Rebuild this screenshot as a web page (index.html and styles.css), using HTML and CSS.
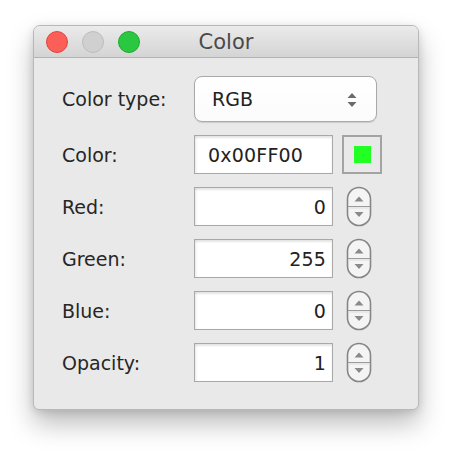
FILE: index.html
```html
<!DOCTYPE html>
<html>
<head>
<meta charset="utf-8">
<link rel="stylesheet" href="styles.css">
</head>
<body>
<div class="window">
  <div class="titlebar">
    <div class="lights">
      <span class="light red"></span>
      <span class="light gray"></span>
      <span class="light green"></span>
    </div>
    <div class="title">Color</div>
  </div>
  <div class="content">
    <div class="label">Color type:</div>
    <div class="select">
      <span>RGB</span>
      <svg class="updown" width="12" height="16" viewBox="0 0 12 16"><path d="M6 1 L10.5 6 H1.5 Z M6 15 L10.5 10 H1.5 Z" fill="#6b6b6b"/></svg>
    </div>

    <div class="label">Color:</div>
    <div class="field left">0x00FF00</div>
    <div class="swatch"><span class="chip"></span></div>

    <div class="label">Red:</div>
    <div class="field">0</div>
    <div class="spin"><svg width="26" height="41" viewBox="0 0 26 41"><rect x="1.5" y="1.5" width="23" height="38" rx="11.5" fill="#f4f4f4" stroke="#868686" stroke-width="1.6"/><line x1="2" y1="20.5" x2="24" y2="20.5" stroke="#9a9a9a" stroke-width="1.2"/><line x1="2" y1="22" x2="24" y2="22" stroke="#dcdcdc" stroke-width="1"/><path d="M13 10.5 L17.5 15.5 H8.5 Z" fill="#8a8a8a"/><path d="M13 31 L17.5 26 H8.5 Z" fill="#8a8a8a"/></svg></div>

    <div class="label">Green:</div>
    <div class="field">255</div>
    <div class="spin"><svg width="26" height="41" viewBox="0 0 26 41"><rect x="1.5" y="1.5" width="23" height="38" rx="11.5" fill="#f4f4f4" stroke="#868686" stroke-width="1.6"/><line x1="2" y1="20.5" x2="24" y2="20.5" stroke="#9a9a9a" stroke-width="1.2"/><line x1="2" y1="22" x2="24" y2="22" stroke="#dcdcdc" stroke-width="1"/><path d="M13 10.5 L17.5 15.5 H8.5 Z" fill="#8a8a8a"/><path d="M13 31 L17.5 26 H8.5 Z" fill="#8a8a8a"/></svg></div>

    <div class="label">Blue:</div>
    <div class="field">0</div>
    <div class="spin"><svg width="26" height="41" viewBox="0 0 26 41"><rect x="1.5" y="1.5" width="23" height="38" rx="11.5" fill="#f4f4f4" stroke="#868686" stroke-width="1.6"/><line x1="2" y1="20.5" x2="24" y2="20.5" stroke="#9a9a9a" stroke-width="1.2"/><line x1="2" y1="22" x2="24" y2="22" stroke="#dcdcdc" stroke-width="1"/><path d="M13 10.5 L17.5 15.5 H8.5 Z" fill="#8a8a8a"/><path d="M13 31 L17.5 26 H8.5 Z" fill="#8a8a8a"/></svg></div>

    <div class="label">Opacity:</div>
    <div class="field">1</div>
    <div class="spin"><svg width="26" height="41" viewBox="0 0 26 41"><rect x="1.5" y="1.5" width="23" height="38" rx="11.5" fill="#f4f4f4" stroke="#868686" stroke-width="1.6"/><line x1="2" y1="20.5" x2="24" y2="20.5" stroke="#9a9a9a" stroke-width="1.2"/><line x1="2" y1="22" x2="24" y2="22" stroke="#dcdcdc" stroke-width="1"/><path d="M13 10.5 L17.5 15.5 H8.5 Z" fill="#8a8a8a"/><path d="M13 31 L17.5 26 H8.5 Z" fill="#8a8a8a"/></svg></div>
  </div>
</div>
</body>
</html>
```
FILE: styles.css
```css
html, body {
  margin: 0;
  padding: 0;
  background: #ffffff;
}
body {
  font-family: "DejaVu Sans", "Liberation Sans", sans-serif;
  color: #262626;
  padding: 25px 0 40px 33px;
}
.window {
  width: 386px;
  height: 385px;
  box-sizing: border-box;
  background: #e9e9e9;
  border: 1px solid #b8b8b8;
  border-radius: 7px 7px 6px 6px;
  box-shadow: 0 14px 26px rgba(0,0,0,0.26), 0 2px 8px rgba(0,0,0,0.12);
  overflow: hidden;
}
.titlebar {
  height: 31px;
  border-bottom: 1px solid #b3b3b3;
  background: linear-gradient(#ebebeb, #d4d4d4);
  display: grid;
  grid-template-columns: 1fr auto 1fr;
  align-items: center;
}
.lights {
  display: flex;
  gap: 14px;
  padding-left: 12px;
  padding-top: 1px;
}
.light {
  width: 22px;
  height: 22px;
  border-radius: 50%;
  box-sizing: border-box;
  display: block;
}
.red { background: #fc5f57; border: 1px solid #e0443e; }
.gray { background: #d0d0d0; border: 1px solid #bcbcbc; }
.green { background: #2ac840; border: 1px solid #1eaa2f; }
.title {
  font-size: 21px;
  color: #4a4a4a;
  padding-top: 1px;
}
.content {
  display: grid;
  grid-template-columns: 132px 139px 9px 40px;
  grid-auto-rows: 39px;
  grid-template-rows: 46px;
  row-gap: 13px;
  padding: 18px 0 0 28px;
  align-items: center;
}
.label {
  grid-column: 1;
  font-size: 19px;
  color: #262626;
}
.select {
  grid-column: 2 / span 3;
  width: 183px;
  height: 46px;
  box-sizing: border-box;
  border: 1px solid #a9a9a9;
  border-radius: 8px;
  background: linear-gradient(#ffffff, #fbfbfb);
  box-shadow: 0 1px 1px rgba(0,0,0,0.12);
  display: flex;
  align-items: center;
  justify-content: space-between;
  padding: 0 18px 0 17px;
  font-size: 19px;
  color: #222;
}
.updown { display: block; margin-top: 1px; }
.field {
  grid-column: 2;
  height: 39px;
  box-sizing: border-box;
  border: 1px solid #a8a8a8;
  background: #ffffff;
  box-shadow: inset 0 2px 2px rgba(0,0,0,0.10), inset 2px 0 2px rgba(0,0,0,0.04);
  font-size: 19px;
  color: #222;
  display: flex;
  align-items: center;
  justify-content: flex-end;
  padding: 1px 6px 0 8px;
  letter-spacing: 0.2px;
}
.field.left { justify-content: flex-start; padding-left: 13px; }
.swatch {
  grid-column: 4;
  width: 40px;
  height: 39px;
  box-sizing: border-box;
  border: 2px solid #a3a3a3;
  display: flex;
  align-items: center;
  justify-content: center;
}
.chip {
  width: 17px;
  height: 17px;
  background: #22ff22;
  display: block;
}
.spin {
  grid-column: 4;
  display: flex;
  padding-left: 4px;
}
.spin svg { display: block; }
```
